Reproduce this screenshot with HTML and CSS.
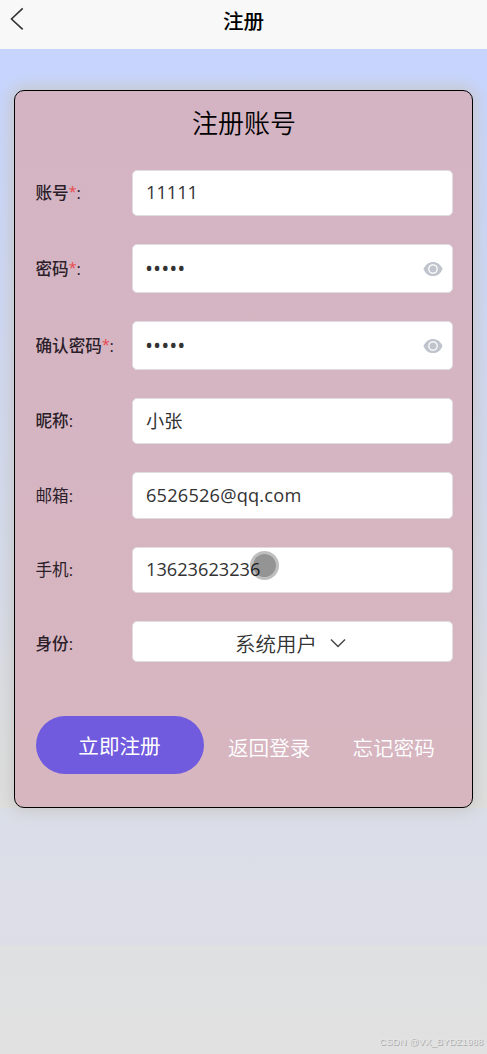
FILE: index.html
```
<!DOCTYPE html>
<html lang="zh-CN">
<head>
    <meta charset="UTF-8">
    <meta name="viewport" content="width=device-width, initial-scale=1.0">
    <title>注册</title>
    <link rel="stylesheet" href="styles.css">
</head>
<body>
    <header class="navbar">
        <button class="back" type="button" title="返回">
            <svg viewBox="0 0 14 24"><path d="M12.7 1.4L1.5 12l11.2 10.4"/></svg>
        </button>
        <h1>注册</h1>
    </header>

    <form class="card">
        <h2>注册账号</h2>
        <div class="campo">
            <label for="account">账号<i>*</i>:</label>
            <input class="captura" id="account" type="text" value="11111">
        </div>
        <div class="campo">
            <label for="pwd">密码<i>*</i>:</label>
            <div class="captura password">
                <input id="pwd" type="password" value="11111">
                <svg class="eye" viewBox="0 0 20 16"><path d="M.5 8C2.500 3 6 .9 10 .9S17.500 3 19.500 8c-2 5-5.500 7.100-9.500 7.100S2.500 13 .5 8z"/><circle cx="10" cy="8" r="4.200"/></svg>
            </div>
        </div>
        <div class="campo">
            <label for="pwd2">确认密码<i>*</i>:</label>
            <div class="captura password">
                <input id="pwd2" type="password" value="11111">
                <svg class="eye" viewBox="0 0 20 16"><path d="M.5 8C2.500 3 6 .9 10 .9S17.500 3 19.500 8c-2 5-5.500 7.100-9.500 7.100S2.500 13 .5 8z"/><circle cx="10" cy="8" r="4.200"/></svg>
            </div>
        </div>
        <div class="campo">
            <label for="nickname">昵称:</label>
            <input class="captura" id="nickname" type="text" value="小张">
        </div>
        <div class="campo">
            <label class="light" for="email">邮箱:</label>
            <input class="captura email" id="email" type="text" value="6526526@qq.com">
        </div>
        <div class="campo">
            <label class="light" for="phone">手机:</label>
            <input class="captura" id="phone" type="text" value="13623623236">
            <span class="touch"></span>
        </div>
        <div class="campo">
            <label class="role">身份:</label>
            <div class="captura picker">
                <span>系统用户</span>
                <svg viewBox="0 0 16 10"><path d="M1 1.500l7 7 7-7"/></svg>
            </div>
        </div>
        <div class="actions">
            <button class="submit" type="button">立即注册</button>
            <a>返回登录</a>
            <a>忘记密码</a>
        </div>
    </form>

    <div class="watermark">CSDN @VX_BYDZ1988</div>
</body>
</html>
```
FILE: styles.css
```
* {
    box-sizing: border-box;
    margin: 0;
    padding: 0;
}

body {
    position: relative;
    height: 1054px;
    overflow: hidden;
    font-family: "Open Sans", "Noto Sans CJK SC", sans-serif;
    color: #333;
    background: linear-gradient(#c6d4fe 49px, #c8d5fb 130px, #d0d8f0 400px, #d6dbe9 600px, #dddee0 720px, #dfdfde 808px, #dadee8 808px, #dddde7 945px, #dfe0e2 946px, #e1e1e1 1054px);
}

button {
    border: none;
    font-family: inherit;
}

/* Barra superior */
.navbar {
    display: grid;
    grid-template-columns: 60px 1fr 60px;
    height: 49px;
    background-color: #f8f8f8;
}

.back {
    display: flex;
    padding: 7px 0 0 10px;
    background: none;
}

.back svg {
    width: 14px;
    height: 24px;
    fill: none;
    stroke: #333;
    stroke-width: 1.6;
}

.navbar h1 {
    text-align: center;
    font-size: 20.600px;
    font-weight: 500;
    line-height: 42px;
    color: #000;
}

/* Formulario */
.card {
    width: 459px;
    height: 718px;
    margin: 41px 0 0 14px;
    padding: 0 19px 0 20px;
    border: 1px solid #000;
    border-radius: 10px;
    background: linear-gradient(#d4b4c3, #d7b6c0);
    box-shadow: 0 0 16px 3px #c8c8c8;
}

.card h2 {
    height: 79px;
    text-align: center;
    font-size: 26px;
    font-weight: 350;
    line-height: 65px;
    color: #000;
}

.campo {
    position: relative;
    display: flex;
    align-items: center;
    margin-bottom: 28px;
}

.campo label {
    width: 97px;
    padding-left: 0.5px;
    font-size: 16.600px;
    font-weight: 500;
    line-height: 24px;
    white-space: nowrap;
    color: #2b2029;
}

.campo label.light {
    font-weight: 400;
}

.campo label.role {
    padding-top: 5px;
}

.campo label i {
    font-style: normal;
    font-weight: 400;
    font-size: 14px;
    line-height: 1;
    vertical-align: 2px;
    color: #e8474c;
}

.captura {
    flex: 1;
    min-width: 0;
    height: 46px;
    padding: 0 12px 2px 13px;
    border: 1px solid #dfdde1;
    border-radius: 5px;
    background-color: #fff;
    font-family: inherit;
    font-size: 18.200px;
    font-weight: 400;
    color: #333;
}

.email {
    height: 47px;
    letter-spacing: 0.2px;
}

.password {
    display: flex;
    align-items: center;
    height: 49px;
    padding: 0 9px 0 12px;
}

.password input {
    flex: 1;
    min-width: 0;
    height: 40px;
    padding-bottom: 2px;
    border: none;
    outline: none;
    font-family: inherit;
    font-size: 21.500px;
    color: #333;
}

.eye {
    width: 20px;
    height: 16px;
    fill: #c0c4cc;
}

.eye circle {
    stroke: #fff;
    stroke-width: 1.300;
}

.picker {
    display: flex;
    justify-content: center;
    align-items: center;
    gap: 13px;
    height: 41px;
    padding: 2px 14px 0 10px;
    font-size: 20.500px;
    font-weight: 350;
}

.picker svg {
    width: 16px;
    height: 10px;
    fill: none;
    stroke: #444;
    stroke-width: 1.400;
}

/* Punto del toque sobre la pantalla */
.touch {
    position: absolute;
    left: 215px;
    top: 4px;
    width: 29px;
    height: 29px;
    border: 3px solid rgba(0, 0, 0, 0.25);
    border-radius: 50%;
    background-color: rgba(0, 0, 0, 0.42);
    background-clip: padding-box;
}

/* Botones */
.actions {
    display: flex;
    align-items: center;
    margin-top: 54px;
    padding-left: 1px;
    font-size: 20.600px;
    font-weight: 350;
    color: #fff;
}

.submit {
    width: 168px;
    height: 58px;
    padding-right: 1px;
    border-radius: 29px;
    background-color: #705ade;
    font-size: 20.600px;
    color: #fff;
}

.actions a {
    margin-left: 24px;
    padding-top: 4px;
}

.actions a + a {
    margin-left: 42px;
}

.watermark {
    position: absolute;
    right: 4px;
    bottom: 5px;
    font-family: "Liberation Sans", sans-serif;
    font-size: 9.500px;
    line-height: 14px;
    color: #e6e6e6;
    text-shadow: 1px 1px 0 #aaa;
}
```
